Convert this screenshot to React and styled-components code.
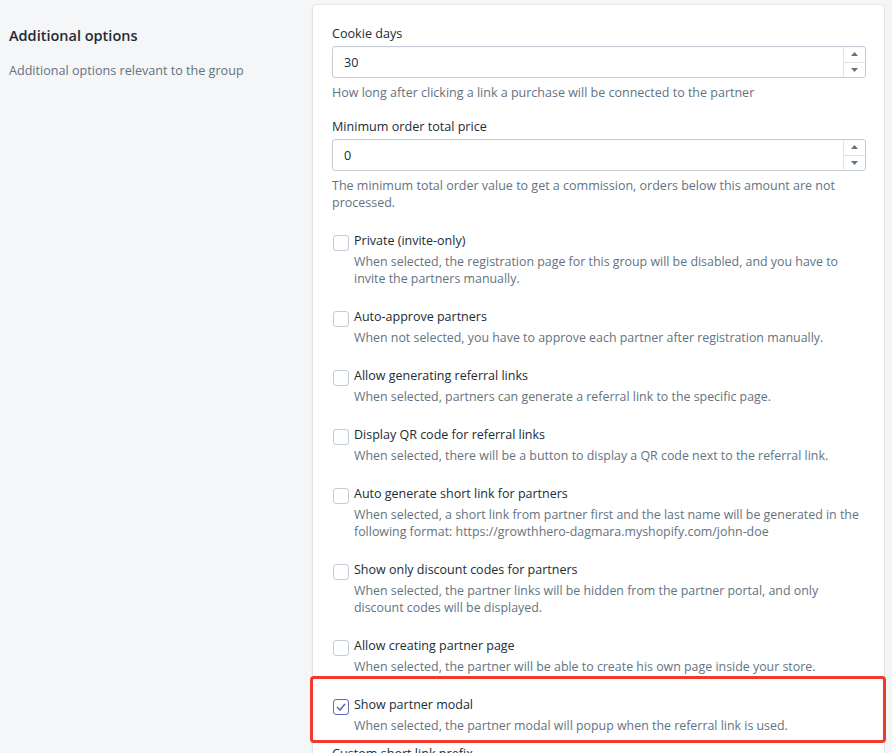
import React from "react";
import styled, { createGlobalStyle } from "styled-components";

const Global = createGlobalStyle`
  html, body { margin: 0; padding: 0; background: #f4f6f8; }
  body { font-family: "Open Sans", "Noto Sans", sans-serif; color: #212b36; overflow: hidden; }
`;

const Page = styled.div`
  display: flex;
  align-items: flex-start;
  padding: 5px 8px 0 9px;
  height: 748px;
  overflow: hidden;
`;

const Annotation = styled.div`
  width: 304px;
  flex: none;
  padding-top: 19px;
`;

const Heading = styled.h2`
  margin: 0;
  font-size: 14.5px;
  line-height: 24px;
  font-weight: 600;
  color: #212b36;
`;

const AnnotationText = styled.p`
  margin: 13px 0 0;
  font-size: 12.6px;
  line-height: 20px;
  color: #637381;
`;

const Card = styled.div`
  position: relative;
  flex: 1;
  background: #fff;
  border-radius: 3px;
  box-shadow: 0 0 0 1px rgba(63, 63, 68, 0.05), 0 1px 3px 0 rgba(63, 63, 68, 0.15);
  padding: 21px 18px 0 19px;
  min-height: 800px;
`;

const Field = styled.div`
  margin-bottom: ${(p) => p.$gap ?? 18}px;
`;

const Label = styled.div`
  font-size: 12.6px;
  line-height: 16px;
  margin-bottom: 4px;
  color: #212b36;
`;

const InputBox = styled.div`
  display: flex;
  height: 30px;
  border: 1px solid #c4cdd5;
  border-radius: 3px;
  box-shadow: inset 0 1px 0 0 rgba(99, 115, 129, 0.05);
  background: #fff;
`;

const InputValue = styled.div`
  flex: 1;
  display: flex;
  align-items: center;
  padding-left: 11px;
  font-size: 12.6px;
  color: #212b36;
`;

const Spinner = styled.div`
  width: 21px;
  display: flex;
  flex-direction: column;
  border-left: 1px solid #dfe3e8;
`;

const SpinHalf = styled.div`
  flex: 1;
  display: flex;
  align-items: center;
  justify-content: center;
  border-top: ${(p) => (p.$bottom ? "1px solid #dfe3e8" : "none")};
`;

const Help = styled.div`
  margin-top: 6px;
  font-size: 12.5px;
  line-height: 17px;
  color: #637381;
`;

const Options = styled.div`
  margin-top: 22px;
`;

const Option = styled.div`
  position: relative;
  display: grid;
  grid-template-columns: 22px 1fr;
  margin-bottom: 22px;

  &:last-child {
    margin-bottom: 12px;
  }
`;

const Box = styled.div`
  width: 14px;
  height: 14px;
  margin-top: 2px;
  margin-left: 1px;
  border: 1px solid ${(p) => (p.$checked ? "#5c6ac4" : "#c4cdd5")};
  border-radius: 3px;
  background: #fff;
  display: flex;
  align-items: center;
  justify-content: center;
`;

const OptionLabel = styled.div`
  font-size: 12.5px;
  line-height: 20px;
  color: #212b36;
  margin-top: -2px;
`;

const OptionHelp = styled.div`
  grid-column: 2;
  font-size: 12.4px;
  line-height: 17px;
  color: #637381;
  margin-top: 2px;
`;

const Highlight = styled.div`
  position: absolute;
  left: -22px;
  right: -20px;
  top: -21px;
  bottom: -9px;
  border: 3px solid #f23a2c;
  border-radius: 4px;
  pointer-events: none;
`;

const Tri = ({ up }) => (
  <svg width="7" height="4" viewBox="0 0 7 4">
    <path d={up ? "M0 4 L3.5 0 L7 4 Z" : "M0 0 L3.5 4 L7 0 Z"} fill="#637381" />
  </svg>
);

const NumberInput = ({ value }) => (
  <InputBox>
    <InputValue>{value}</InputValue>
    <Spinner>
      <SpinHalf>
        <Tri up />
      </SpinHalf>
      <SpinHalf $bottom>
        <Tri />
      </SpinHalf>
    </Spinner>
  </InputBox>
);

const options = [
  {
    label: "Private (invite-only)",
    help: "When selected, the registration page for this group will be disabled, and you have to invite the partners manually.",
  },
  {
    label: "Auto-approve partners",
    help: "When not selected, you have to approve each partner after registration manually.",
  },
  {
    label: "Allow generating referral links",
    help: "When selected, partners can generate a referral link to the specific page.",
  },
  {
    label: "Display QR code for referral links",
    help: "When selected, there will be a button to display a QR code next to the referral link.",
  },
  {
    label: "Auto generate short link for partners",
    help: "When selected, a short link from partner first and the last name will be generated in the following format: https://growthhero-dagmara.myshopify.com/john-doe",
  },
  {
    label: "Show only discount codes for partners",
    help: "When selected, the partner links will be hidden from the partner portal, and only discount codes will be displayed.",
  },
  {
    label: "Allow creating partner page",
    help: "When selected, the partner will be able to create his own page inside your store.",
  },
  {
    label: "Show partner modal",
    help: "When selected, the partner modal will popup when the referral link is used.",
    checked: true,
    highlight: true,
  },
];

export default function App() {
  return (
    <>
      <Global />
      <Page>
        <Annotation>
          <Heading>Additional options</Heading>
          <AnnotationText>Additional options relevant to the group</AnnotationText>
        </Annotation>
        <Card>
          <Field>
            <Label>Cookie days</Label>
            <NumberInput value="30" />
            <Help>How long after clicking a link a purchase will be connected to the partner</Help>
          </Field>
          <Field $gap={0}>
            <Label>Minimum order total price</Label>
            <NumberInput value="0" />
            <Help>
              The minimum total order value to get a commission, orders below this amount are not processed.
            </Help>
          </Field>
          <Options>
            {options.map((o) => (
              <Option key={o.label}>
                <Box $checked={o.checked}>
                  {o.checked && (
                    <svg width="10" height="8" viewBox="0 0 10 8">
                      <path d="M1 4 L4 7 L9 1" fill="none" stroke="#5c6ac4" strokeWidth="1.6" />
                    </svg>
                  )}
                </Box>
                <OptionLabel>{o.label}</OptionLabel>
                <OptionHelp>{o.help}</OptionHelp>
                {o.highlight && <Highlight />}
              </Option>
            ))}
          </Options>
          <Field>
            <Label>Custom short link prefix</Label>
          </Field>
        </Card>
      </Page>
    </>
  );
}
